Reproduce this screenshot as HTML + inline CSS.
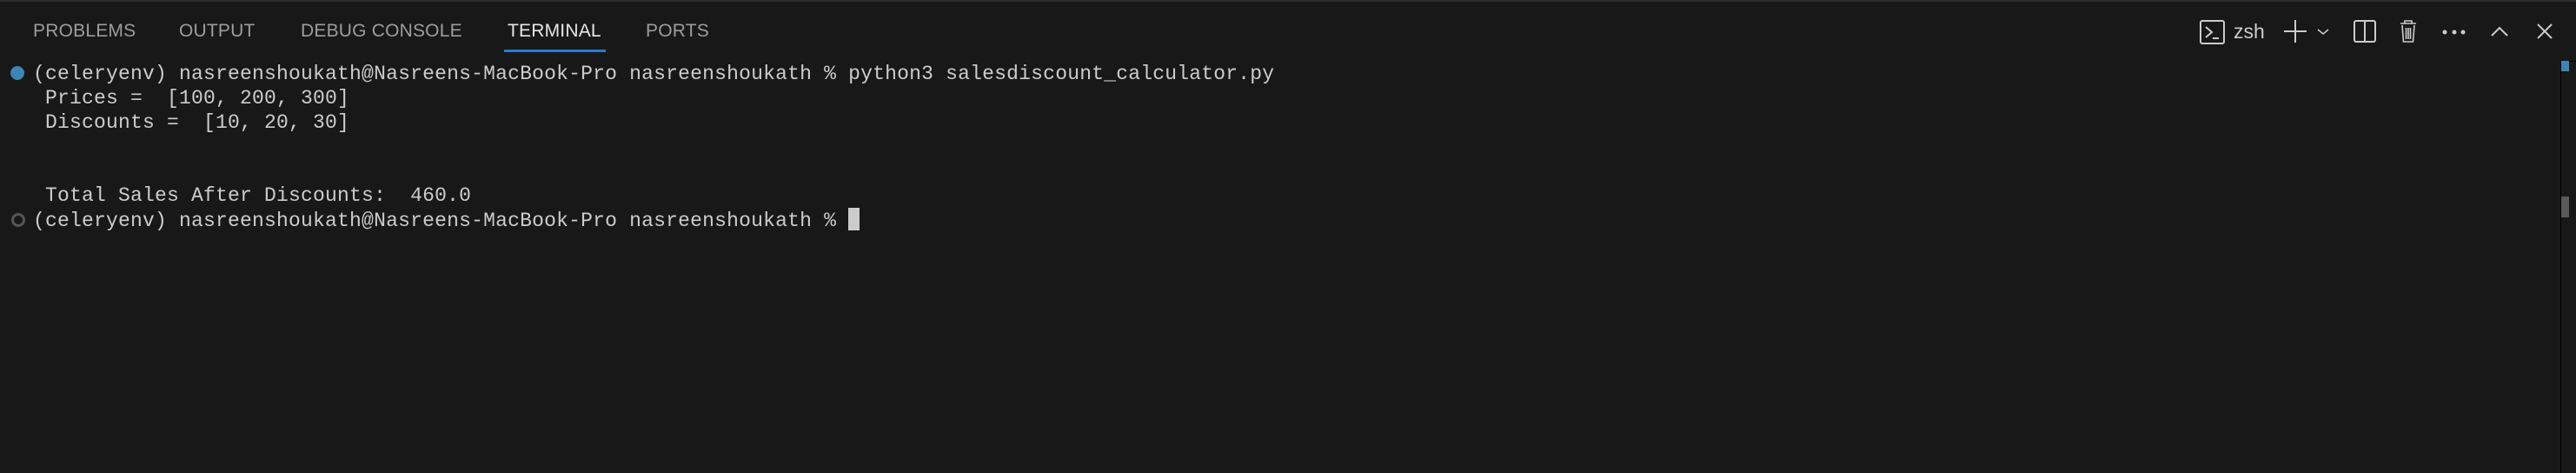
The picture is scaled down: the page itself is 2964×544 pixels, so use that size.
<!DOCTYPE html>
<html><head><style>
html,body{margin:0;padding:0;background:#181818;width:2964px;height:544px;overflow:hidden;position:relative}
.top{position:absolute;left:0;top:0;width:2964px;height:2px;background:#2b2b2b}
.tab{position:absolute;top:24px;font:21px "Liberation Sans",sans-serif;color:#9d9d9d;letter-spacing:0.2px}
.ul{position:absolute;left:580px;top:57px;width:117px;height:3px;background:#2b7bd0}
.term{position:absolute;left:38px;top:71px;font:23px "Liberation Mono",monospace;color:#cccccc;line-height:28px;white-space:pre;letter-spacing:0.2px}
.dot{position:absolute;left:12px;top:76px;width:16px;height:16px;border-radius:50%;background:#3b86b4}
.dot2{position:absolute;left:13px;top:245px;width:10px;height:10px;border-radius:50%;border:3px solid #555}
.cur{display:inline-block;width:13px;height:26px;background:#cccccc;vertical-align:-5px}
.sb{position:absolute;left:2946px;top:70px;width:1px;height:474px;background:#000}
.sbt{position:absolute;left:2946px;top:70px;width:18px;height:1px;background:#000}
svg{position:absolute;top:0;left:0}
</style></head><body>
<div class="top"></div>
<div class="tab" style="left:38px">PROBLEMS</div>
<div class="tab" style="left:206px">OUTPUT</div>
<div class="tab" style="left:346px">DEBUG CONSOLE</div>
<div class="tab" style="left:584px;color:#e7e7e7">TERMINAL</div>
<div class="tab" style="left:743px">PORTS</div>
<div class="ul"></div>
<div class="dot"></div><div class="dot2"></div>
<div class="term">(celeryenv) nasreenshoukath@Nasreens-MacBook-Pro nasreenshoukath % python3 salesdiscount_calculator.py
 Prices =  [100, 200, 300]
 Discounts =  [10, 20, 30]


 Total Sales After Discounts:  460.0
(celeryenv) nasreenshoukath@Nasreens-MacBook-Pro nasreenshoukath % <span class="cur"></span></div>
<div class="sb"></div><div class="sbt"></div>
<div style="position:absolute;left:2947px;top:70px;width:9px;height:12px;background:#3b86b4"></div>
<div style="position:absolute;left:2947px;top:226px;width:9px;height:24px;background:#5a5a5a"></div>
<div style="position:absolute;left:2570px;top:23px;font:23px 'Liberation Sans',sans-serif;color:#cccccc">zsh</div>
<svg width="2964" height="80" fill="none" stroke="#cccccc" stroke-width="2">
<rect x="2532" y="24" width="27" height="26" rx="2"/>
<path d="M2538 31l7 6-7 6M2546 44h7"/>
<path d="M2641 23v26M2628 36h26"/>
<path d="M2667 34l6 5 6-5" stroke-width="1.5"/>
<rect x="2709" y="24" width="24" height="24" rx="2"/><path d="M2721 24v24"/>
<path d="M2762 27h18M2767 27v-3h8v3M2764 29l1.5 19h11l1.5-19M2768.5 32v13M2771 32v13M2773.5 32v13" stroke-width="1.6"/>
<circle cx="2813" cy="37" r="1.5" fill="#ccc"/><circle cx="2824" cy="37" r="1.5" fill="#ccc"/><circle cx="2834" cy="37" r="1.5" fill="#ccc"/>
<path d="M2867 41l9-9 9 9"/>
<path d="M2920 28l16 16M2936 28l-16 16"/>
</svg>
</body></html>
